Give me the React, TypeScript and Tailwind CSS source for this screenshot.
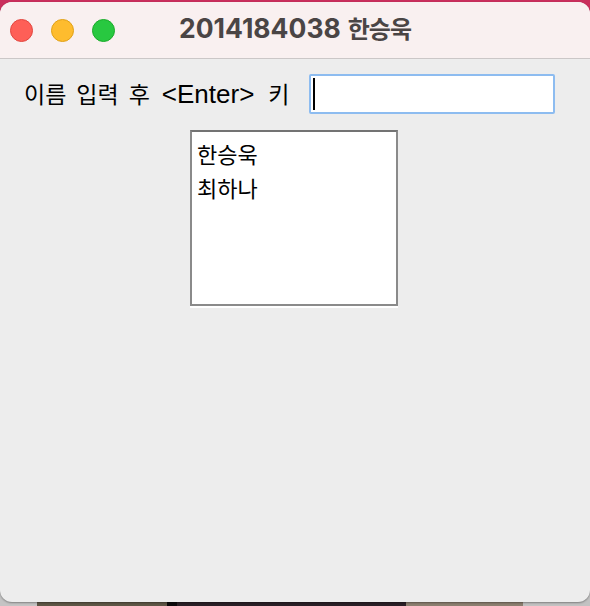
const kr = "font-['Noto_Sans_CJK_KR',sans-serif]"

function TrafficLights() {
  return (
    <div className="flex items-center gap-[18px] pl-[10px]">
      <span className="h-[23px] w-[23px] rounded-full bg-[#fe5f57] border border-[#e2463f]" />
      <span className="h-[23px] w-[23px] rounded-full bg-[#febc2e] border border-[#e1a116]" />
      <span className="h-[23px] w-[23px] rounded-full bg-[#28c840] border border-[#1aab29]" />
    </div>
  )
}

export default function App() {
  const names = ['한승욱', '최하나']

  return (
    <div className={`relative h-[606px] w-[590px] overflow-hidden bg-[#c6c6c6] ${kr}`}>
      {/* desktop behind the window */}
      <div className="absolute inset-x-0 top-0 h-[24px] bg-[#c92f5c]" />
      <div className="absolute inset-x-0 bottom-0 flex h-[24px]">
        <div className="w-[37px] bg-[#c4c4c4]" />
        <div className="w-[130px] bg-[#5e5646]" />
        <div className="w-[10px] bg-[#0c0a0c]" />
        <div className="w-[229px] bg-[#2a1f26]" />
        <div className="w-[117px] bg-[#8c7f70]" />
        <div className="flex-1 bg-[#c2c2c2]" />
      </div>

      {/* window */}
      <div className="relative mt-[2px] flex h-[600px] w-[590px] flex-col overflow-hidden rounded-[12px] bg-[#ededed] shadow-[0_1px_2px_rgba(0,0,0,0.35)]">
        <div className="relative flex h-[57px] items-center border-b border-[#cbc7c7] bg-[#f9f0f0]">
          <TrafficLights />
          <div className="absolute inset-0 flex items-baseline justify-center gap-[7px] pt-[13px] font-bold leading-none text-[#4a4545]">
            <span className="font-['Inter',sans-serif] text-[26.5px]">2014184038</span>
            <span className="text-[24px] tracking-[-1px]">한승욱</span>
          </div>
        </div>

        <div className="flex flex-col">
          <div className="flex items-center pl-[24px] pt-[15px]">
            <div className="flex w-[285px] items-baseline whitespace-nowrap text-[23px] leading-none text-black">
              <span>이름</span>
              <span className="ml-[10px]">입력</span>
              <span className="ml-[10px]">후</span>
              <span className="ml-[12px] font-['Liberation_Sans',sans-serif] text-[26px]">&lt;Enter&gt;</span>
              <span className="ml-[14px]">키</span>
            </div>
            <div className="flex h-[40px] w-[246px] items-center rounded-[2px] border-2 border-[#8dbcf0] bg-white pl-[2px]">
              <span className="h-[32px] w-[2px] bg-black" />
            </div>
          </div>

          <div className="flex justify-center pr-[2px] pt-[16px]">
            <div className="flex h-[176px] w-[208px] flex-col border-2 border-[#8a8a8a] border-t-[#737373] bg-white px-[5px] pt-[4px] shadow-[0_2px_0_#ffffff]">
              {names.map(n => (
                <div key={n} className="h-[34px] text-[22px] leading-[34px] text-black">
                  {n}
                </div>
              ))}
            </div>
          </div>
        </div>
      </div>
    </div>
  )
}
